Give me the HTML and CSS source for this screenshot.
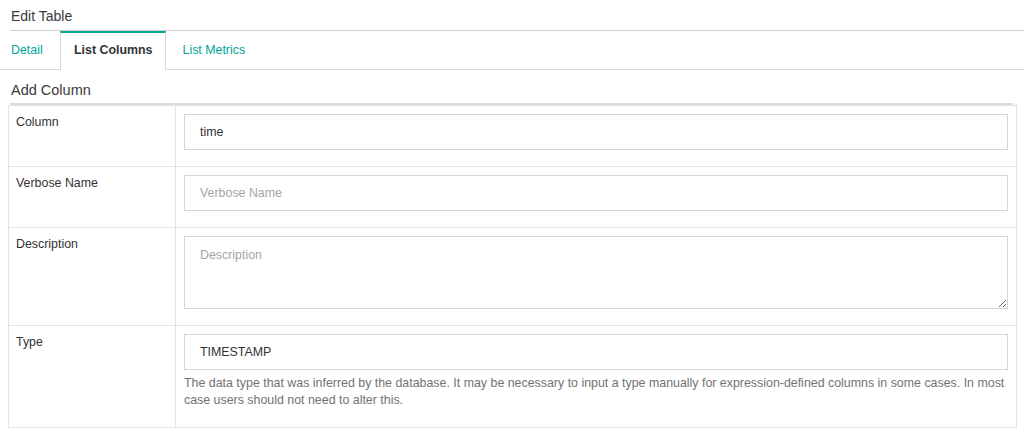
FILE: index.html
```html
<!DOCTYPE html>
<html lang="en">
<head>
<meta charset="utf-8">
<title>Edit Table</title>
<link rel="stylesheet" href="styles.css">
</head>
<body>
  <div class="title">Edit Table</div>
  <ul class="tabs">
    <li class="tab tab-first">Detail</li>
    <li class="tab tab-active">List Columns</li>
    <li class="tab tab-last">List Metrics</li>
  </ul>
  <h4 class="section">Add Column</h4>
  <table class="form-table">
    <tr class="row">
      <td class="label-cell">Column</td>
      <td class="field-cell"><input class="field" type="text" value="time"></td>
    </tr>
    <tr class="row">
      <td class="label-cell">Verbose Name</td>
      <td class="field-cell"><input class="field" type="text" placeholder="Verbose Name"></td>
    </tr>
    <tr class="row">
      <td class="label-cell">Description</td>
      <td class="field-cell"><textarea class="field area" placeholder="Description"></textarea></td>
    </tr>
    <tr class="row">
      <td class="label-cell">Type</td>
      <td class="field-cell">
        <input class="field field-help" type="text" value="TIMESTAMP">
        <p class="help">The data type that was inferred by the database. It may be necessary to input a type manually for expression-defined columns in some cases. In most case users should not need to alter this.</p>
      </td>
    </tr>
  </table>
</body>
</html>
```

FILE: styles.css
```css
html, body {
  margin: 0;
  padding: 0;
  background: #fff;
}
body {
  font-family: "Liberation Sans", Arial, Helvetica, sans-serif;
  color: #333;
  font-size: 12.4px;
  line-height: 17px;
  overflow: hidden;
}
.title {
  margin: 0 0 0 10px;
  padding: 6px 0 4px 1px;
  font-size: 14px;
  line-height: 20px;
  color: #3a3a3a;
  border-bottom: 1px solid #cfcfcf;
}
.tabs {
  list-style: none;
  margin: 0;
  padding: 0;
  display: flex;
  border-bottom: 1px solid #d9d9d9;
  height: 38px;
}
.tab {
  padding: 10px 14px 0;
  color: #00a699;
  font-size: 12.4px;
  line-height: 17px;
  margin-top: 1px;
}
.tab-first {
  padding-left: 11px;
  width: 35px;
}
.tab-active {
  margin-top: 0;
  color: #333;
  font-weight: bold;
  border-top: 2px solid #00a699;
  border-left: 1px solid #d9d9d9;
  border-right: 1px solid #d9d9d9;
  padding: 9px 13px 0;
  height: 28px;
  margin-bottom: -1px;
  background: #fff;
}
.tab-last {
  padding-left: 16px;
}
.section {
  margin: 0 11px 0 10px;
  padding: 10px 0 3px 1px;
  font-size: 14.5px;
  line-height: 20px;
  font-weight: normal;
  color: #3a3a3a;
  border-bottom: 2px solid #dcdcdc;
}
.form-table {
  margin: 0 0 0 8px;
  width: 1009px;
  border-collapse: collapse;
  border: 1px solid #e3e3e3;
  border-top: none;
}
.row td {
  border: 1px solid #e3e3e3;
  vertical-align: top;
  padding: 8px;
}
.label-cell {
  width: 151px;
  padding-left: 7px !important;
  color: #333;
}
.field {
  display: block;
  box-sizing: border-box;
  width: 100%;
  height: 36px;
  margin: 0 0 8px;
  padding: 0 15px;
  font-family: "Liberation Sans", Arial, Helvetica, sans-serif;
  font-size: 12.4px;
  color: #333;
  border: 1px solid #d6d6d6;
  border-radius: 0;
  background: #fff;
  outline: none;
}
.field::placeholder {
  color: #a5a5a5;
}
.area {
  height: 73px;
  padding: 10px 15px;
  line-height: 17px;
  resize: vertical;
}
.field-help {
  margin-bottom: 5px;
}
.help {
  margin: 0 0 10px;
  font-size: 12.4px;
  line-height: 17px;
  color: #737373;
}
```
